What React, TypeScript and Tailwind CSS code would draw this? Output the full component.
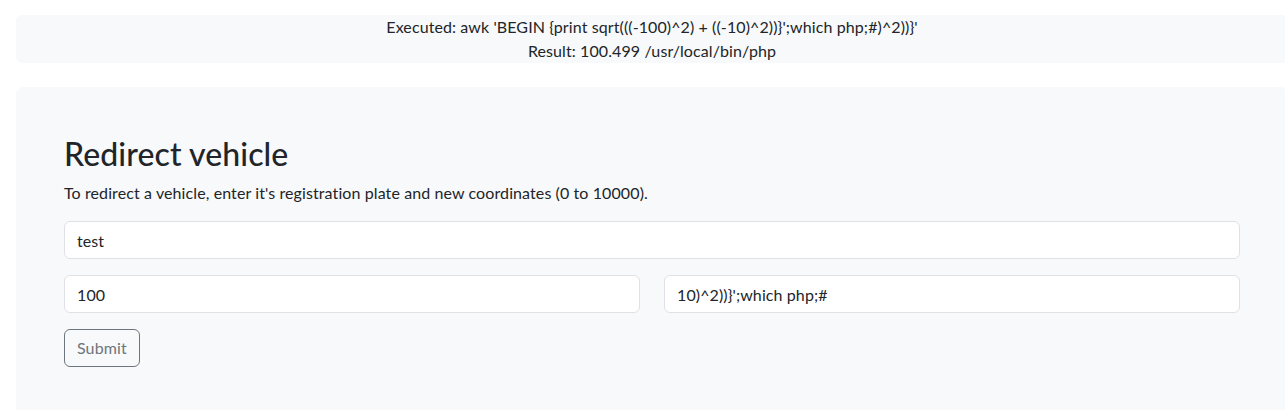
import React from "react";

export default function App() {
  const font = { fontFamily: "Lato, 'Liberation Sans', sans-serif" };
  return (
    <div className="w-[1285px] h-[410px] overflow-hidden bg-white text-[#212529] font-['Lato','Liberation_Sans',sans-serif]" style={font}>
      <div className="w-[1272px] ml-4 pt-[15px]">
        <div className="bg-[#f8f9fa] rounded-md h-[48px] text-center text-[16px] leading-[24px] tracking-[0.1px]">
          <div>Executed: awk 'BEGIN {"{"}print sqrt(((-100)^2) + ((-10)^2)){"}"}';which php;#)^2)){"}"}'</div>
          <div>Result: 100.499 /usr/local/bin/php</div>
        </div>
        <div className="mt-6 bg-[#f8f9fa] rounded-lg p-12 h-[340px]">
          <h2 className="text-[32px] leading-[38.4px] font-medium mb-2 tracking-[0.1px]">Redirect vehicle</h2>
          <p className="text-[16px] leading-[24px] mb-4 tracking-[0.1px]">
            To redirect a vehicle, enter it's registration plate and new coordinates (0 to 10000).
          </p>
          <input
            readOnly
            value="test"
            className="block w-full h-[38px] mb-4 px-3 bg-white border border-[#dee2e6] rounded-md text-[16px] text-[#212529] outline-none tracking-[0.1px]"
            style={font}
          />
          <div className="grid grid-cols-2 gap-6 mb-4">
            <input
              readOnly
              value="100"
              className="block w-full h-[38px] px-3 bg-white border border-[#dee2e6] rounded-md text-[16px] text-[#212529] outline-none tracking-[0.1px]"
              style={font}
            />
            <input
              readOnly
              value="10)^2))}';which php;#"
              className="block w-full h-[38px] px-3 bg-white border border-[#dee2e6] rounded-md text-[16px] text-[#212529] outline-none tracking-[0.1px]"
              style={font}
            />
          </div>
          <button
            className="h-[38px] px-3 border border-[#6c757d] rounded-md text-[16px] text-[#6c757d] bg-transparent tracking-[0.1px]"
            style={font}
          >
            Submit
          </button>
        </div>
      </div>
    </div>
  );
}
